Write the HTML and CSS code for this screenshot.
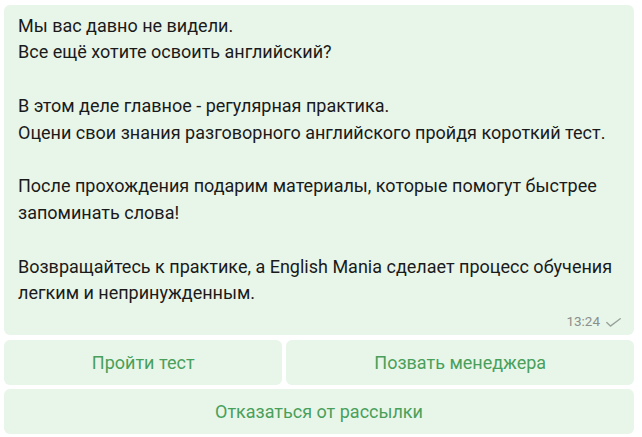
FILE: index.html
```html
<!DOCTYPE html>
<html lang="ru">
<head>
<meta charset="utf-8">
<title>Сообщение</title>
<link rel="stylesheet" href="styles.css">
</head>
<body>
<div class="chat">
  <div class="bubble">
    <div class="text">Мы вас давно не видели.<br>Все ещё хотите освоить английский?<br><br>В этом деле главное - регулярная практика.<br>Оцени свои знания разговорного английского пройдя короткий тест.<br><br>После прохождения подарим материалы, которые помогут быстрее запоминать слова!<br><br>Возвращайтесь к практике, а English Mania сделает процесс обучения легким и непринужденным.</div>
    <div class="meta">
      <span class="time">13:24</span>
      <svg class="check" width="15" height="9" viewBox="0 0 15 9"><path d="M0.8 4.6 L4.4 8.1 L14.2 0.7" fill="none" stroke="#9aa39b" stroke-width="1.4" stroke-linecap="round" stroke-linejoin="round"/></svg>
    </div>
  </div>
  <div class="keyboard">
    <div class="row">
      <div class="btn">Пройти тест</div>
      <div class="btn">Позвать менеджера</div>
    </div>
    <div class="row">
      <div class="btn">Отказаться от рассылки</div>
    </div>
  </div>
</div>
</body>
</html>
```
FILE: styles.css
```css
html, body {
  margin: 0;
  padding: 0;
  background: #ffffff;
}
body {
  font-family: Roboto, "Noto Sans", "Liberation Sans", sans-serif;
  font-size: 18px;
  color: #1a1a1a;
}
.chat {
  width: 630px;
  padding: 5px 8px 0 4px;
}
.bubble {
  background: #e8f5e9;
  border-radius: 6px;
  padding: 7.5px 13px 5.5px 14px;
}
.text {
  line-height: 26.8px;
  padding-right: 1px;
}
.meta {
  display: flex;
  justify-content: flex-end;
  align-items: center;
  gap: 6px;
  margin-top: 6px;
  height: 16px;
  line-height: 16px;
}
.time {
  font-size: 13.5px;
  color: #8a908b;
}
.check {
  display: block;
  margin-top: 2px;
}
.keyboard {
  margin-top: 5px;
  display: flex;
  flex-direction: column;
  gap: 4px;
}
.row {
  display: flex;
  gap: 4px;
}
.btn {
  flex: 1 1 auto;
  height: 45px;
  display: flex;
  align-items: center;
  justify-content: center;
  background: #e8f5e9;
  border-radius: 6px;
  color: #48a05a;
  font-size: 18px;
  white-space: nowrap;
}
```
